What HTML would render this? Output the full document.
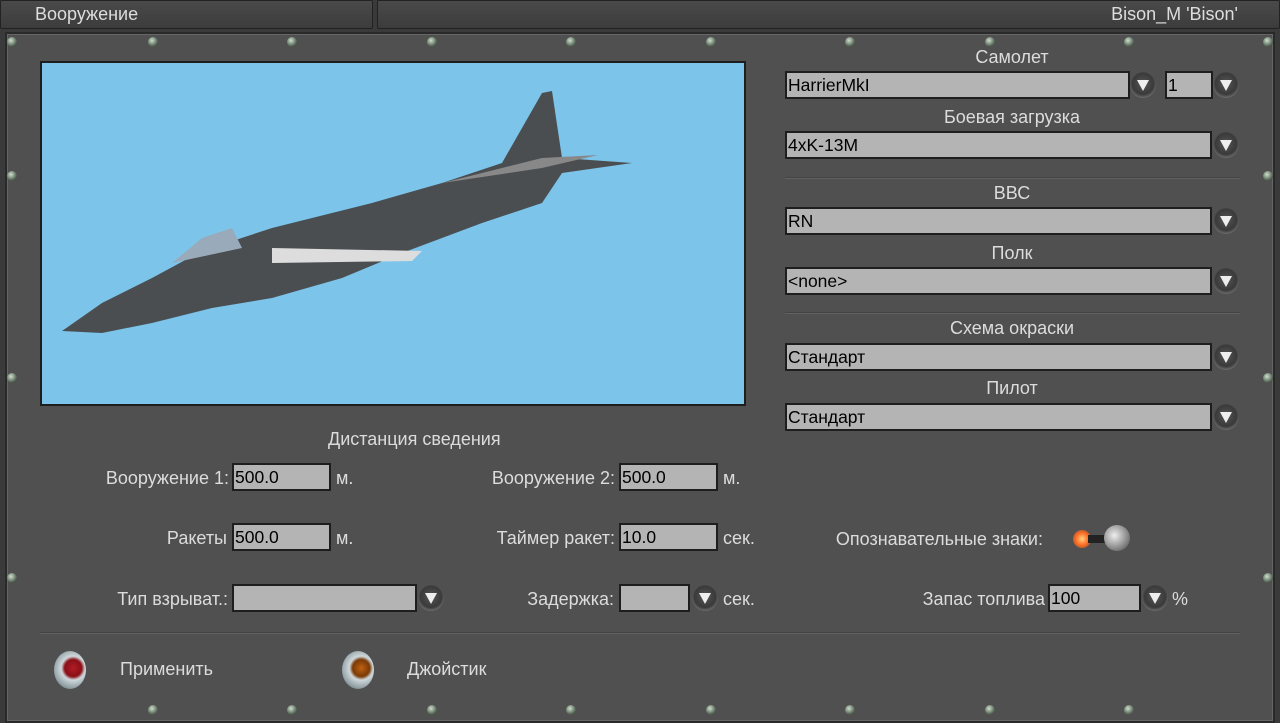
<!DOCTYPE html>
<html><head><meta charset="utf-8"><style>
*{margin:0;padding:0;box-sizing:border-box}
body{width:1280px;height:723px;overflow:hidden;background:#3a3a3a;font-family:"Liberation Sans",sans-serif;position:relative;color:#e0e0e0}
.a{position:absolute}
.tab{position:absolute;top:0;height:29px;background:linear-gradient(#4a4a4a,#3c3c3c);border:1px solid #222;border-radius:2px;font-size:18px;color:#ddd;line-height:27px}
.panel{position:absolute;left:5px;top:32px;width:1270px;height:691px;background:#505050;border:2px solid #2a2a2a;box-shadow:inset 0 0 0 1px #666}
.f{position:absolute;height:28px;background:#b4b4b4;border:2px solid #1e1e1e;color:#000;font-size:17.5px;line-height:24px;padding-left:1px}
.b{position:absolute;width:26px;height:26px;border-radius:50%;background:radial-gradient(circle at 50% 45%,#555 0,#3a3a3a 55%,#707070 75%,#3a3a3a 100%)}
.b:after{content:"";position:absolute;left:7px;top:8px;border-left:6px solid transparent;border-right:6px solid transparent;border-top:11px solid #eee}
.l{position:absolute;font-size:18px;color:#dcdcdc;white-space:nowrap}
.c{text-align:center;width:454px;left:785px}
.r{text-align:right}
.s{position:absolute;width:10px;height:10px;border-radius:50%;background:radial-gradient(circle at 40% 35%,#cfe0cf,#5a6a5a 60%,#222)}
.sep{position:absolute;height:2px;background:#626262;border-top:1px solid #444}
</style></head><body>
<div class="tab" style="left:0;width:373px;padding-left:34px">Вооружение</div>
<div class="tab" style="left:377px;width:903px;text-align:right;padding-right:41px">Bison_M 'Bison'</div>
<div class="panel"></div>
<div class="s" style="left:7px;top:37px"></div><div class="s" style="left:148px;top:37px"></div><div class="s" style="left:287px;top:37px"></div><div class="s" style="left:427px;top:37px"></div><div class="s" style="left:566px;top:37px"></div><div class="s" style="left:706px;top:37px"></div><div class="s" style="left:845px;top:37px"></div><div class="s" style="left:985px;top:37px"></div><div class="s" style="left:1124px;top:37px"></div><div class="s" style="left:1263px;top:37px"></div>
<div class="s" style="left:7px;top:171px"></div><div class="s" style="left:1263px;top:171px"></div><div class="s" style="left:7px;top:373px"></div><div class="s" style="left:1263px;top:373px"></div><div class="s" style="left:7px;top:573px"></div><div class="s" style="left:1263px;top:573px"></div>
<div class="s" style="left:148px;top:705px"></div><div class="s" style="left:287px;top:705px"></div><div class="s" style="left:427px;top:705px"></div><div class="s" style="left:566px;top:705px"></div><div class="s" style="left:706px;top:705px"></div><div class="s" style="left:845px;top:705px"></div><div class="s" style="left:985px;top:705px"></div><div class="s" style="left:1124px;top:705px"></div>
<div class="a" style="left:40px;top:61px;width:706px;height:345px;background:#7dc4ea;border:2px solid #1e1e1e">
<svg width="702" height="341" viewBox="0 0 702 341">
<path d="M20 268 L60 240 L110 215 L160 188 L230 165 L330 140 L400 120 L460 100 L500 30 L510 28 L520 95 L590 100 L520 110 L500 140 L440 160 L360 190 L300 215 L230 235 L170 245 L110 260 L60 270 Z" fill="#4a4e50"/>
<path d="M130 200 L160 175 L190 165 L200 185 Z" fill="#9ab"/>
<path d="M230 185 L380 188 L370 198 L230 200 Z" fill="#ddd"/>
<path d="M400 120 L500 95 L556 92 L500 105 Z" fill="#888"/>
</svg></div>
<div class="l c" style="top:47px">Самолет</div>
<div class="f" style="left:785px;top:71px;width:345px">HarrierMkI</div><div class="b" style="left:1130px;top:72px"></div>
<div class="f" style="left:1165px;top:71px;width:48px">1</div><div class="b" style="left:1213px;top:72px"></div>
<div class="l c" style="top:107px">Боевая загрузка</div>
<div class="f" style="left:785px;top:131px;width:427px">4xK-13M</div><div class="b" style="left:1213px;top:132px"></div>
<div class="sep" style="left:785px;top:177px;width:455px"></div>
<div class="l c" style="top:183px">ВВС</div>
<div class="f" style="left:785px;top:207px;width:427px">RN</div><div class="b" style="left:1213px;top:208px"></div>
<div class="l c" style="top:243px">Полк</div>
<div class="f" style="left:785px;top:267px;width:427px">&lt;none&gt;</div><div class="b" style="left:1213px;top:268px"></div>
<div class="sep" style="left:785px;top:312px;width:455px"></div>
<div class="l c" style="top:318px">Схема окраски</div>
<div class="f" style="left:785px;top:343px;width:427px">Стандарт</div><div class="b" style="left:1213px;top:344px"></div>
<div class="l c" style="top:378px">Пилот</div>
<div class="f" style="left:785px;top:403px;width:427px">Стандарт</div><div class="b" style="left:1213px;top:404px"></div>
<div class="l" style="left:328px;top:429px">Дистанция сведения</div>
<div class="l r" style="left:0;width:229px;top:468px">Вооружение 1:</div><div class="f" style="left:232px;top:463px;width:99px">500.0</div><div class="l" style="left:336px;top:468px">м.</div>
<div class="l r" style="left:0;width:615px;top:468px">Вооружение 2:</div><div class="f" style="left:619px;top:463px;width:99px">500.0</div><div class="l" style="left:723px;top:468px">м.</div>
<div class="l r" style="left:0;width:227px;top:528px">Ракеты</div><div class="f" style="left:232px;top:523px;width:99px">500.0</div><div class="l" style="left:336px;top:528px">м.</div>
<div class="l r" style="left:0;width:615px;top:528px">Таймер ракет:</div><div class="f" style="left:619px;top:523px;width:99px">10.0</div><div class="l" style="left:723px;top:528px">сек.</div>
<div class="l r" style="left:0;width:1043px;top:529px">Опознавательные знаки:</div>
<div class="a" style="left:1073px;top:530px;width:18px;height:18px;border-radius:50%;background:radial-gradient(circle,#ffd080,#ff6a20 50%,rgba(255,80,0,0) 100%)"></div>
<div class="a" style="left:1088px;top:535px;width:22px;height:8px;background:#222"></div>
<div class="a" style="left:1104px;top:525px;width:26px;height:26px;border-radius:50%;background:radial-gradient(circle at 40% 40%,#eee,#888 60%,#444)"></div>
<div class="l r" style="left:0;width:228px;top:589px">Тип взрыват.:</div><div class="f" style="left:232px;top:584px;width:185px"></div><div class="b" style="left:418px;top:585px"></div>
<div class="l r" style="left:0;width:614px;top:589px">Задержка:</div><div class="f" style="left:619px;top:584px;width:71px"></div><div class="b" style="left:692px;top:585px"></div><div class="l" style="left:723px;top:589px">сек.</div>
<div class="l r" style="left:0;width:1045px;top:589px">Запас топлива</div><div class="f" style="left:1048px;top:584px;width:93px">100</div><div class="b" style="left:1142px;top:585px"></div><div class="l" style="left:1172px;top:589px">%</div>
<div class="sep" style="left:40px;top:632px;width:1200px"></div>
<div class="a" style="left:54px;top:651px;width:32px;height:38px;border-radius:50%;background:radial-gradient(circle at 60% 45%,#b01c24 0,#8a1018 30%,#cfd8dc 42%,#7a8a90 80%,#333 100%)"></div>
<div class="l" style="left:120px;top:659px">Применить</div>
<div class="a" style="left:342px;top:651px;width:32px;height:38px;border-radius:50%;background:radial-gradient(circle at 60% 45%,#c06010 0,#7a3a08 30%,#cfd8dc 42%,#7a8a90 80%,#333 100%)"></div>
<div class="l" style="left:407px;top:659px">Джойстик</div>
</body></html>
